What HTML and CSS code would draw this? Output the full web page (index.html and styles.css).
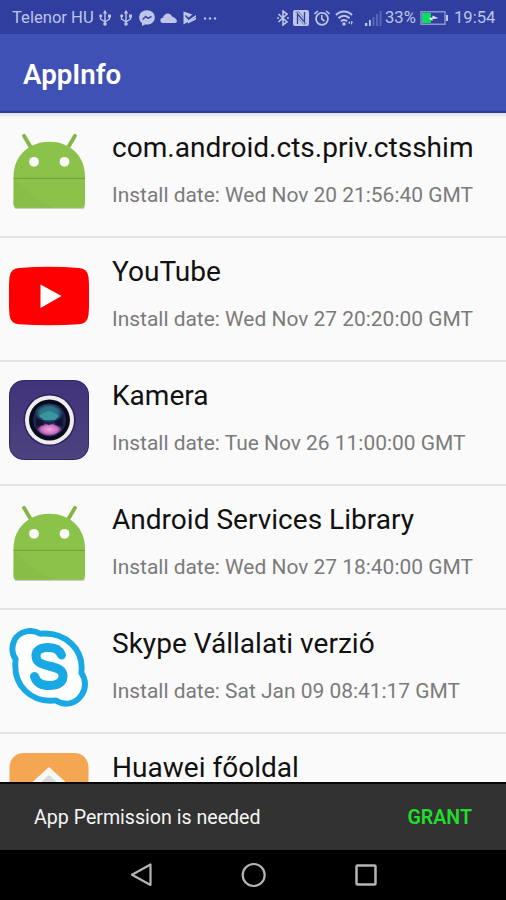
FILE: index.html
```html
<!DOCTYPE html>
<html lang="hu">
<head>
<meta charset="utf-8">
<title>AppInfo</title>
<link rel="stylesheet" href="styles.css">
</head>
<body>
<svg class="defs" width="0" height="0">
  <symbol id="usb" viewBox="0 0 12 16"><path d="M6 1v13M1.500 6v3l4.500 3 4.500-3V6" fill="none" stroke="currentColor" stroke-width="1.400"/><path d="M6 0l2.200 3.500H3.800z"/><circle cx="6" cy="14" r="1.800"/><circle cx="1.700" cy="5.800" r="1.500"/><path d="M9 4.500h3v3H9z"/></symbol>
  <symbol id="android" viewBox="0 1.200 80 80">
    <path d="M15 5l6.500 11M66 5l-6.500 11" stroke="#84b547" stroke-width="3.800" stroke-linecap="round"/>
    <path d="M7 76.500h67" stroke="#b7c1ab" stroke-width="3" stroke-linecap="round"/>
    <path d="M4.500 46C4.500 24 21 11 40.500 11S76 24 76 46V73q0 4-4 4H8.500q-4 0-4-4z" fill="#8bc34a"/>
    <path d="M5 47l21 20 18 10H8q-3.500 0-3.500-4z" fill="#83ba46" opacity=".6"/>
    <path d="M4.500 47.500H76" stroke="#72a340" stroke-width="1.200"/>
    <circle cx="25" cy="31" r="4.900" fill="#fafafa"/><circle cx="55.500" cy="31" r="4.900" fill="#fafafa"/>
  </symbol>
</svg>
<div class="screen">
  <header class="status">
    <div class="status-side">
      <span class="carrier">Telenor HU</span>
      <svg class="usb" width="12" height="16"><use href="#usb"/></svg>
      <svg class="usb2" width="12" height="16"><use href="#usb"/></svg>
      <svg class="msg" width="16" height="16" viewBox="0 0 16 16"><path d="M8 .3c4.500 0 7.800 3 7.800 7.200S12.500 14.600 8 14.600l-2-.2L3 16v-3C1.200 11.800.200 9.800.200 7.500.200 3.300 3.500.300 8 .300z"/><path d="M3.600 9.600l3.100-3.200 2.500 2 3.300-2" fill="none" stroke="#3543a0" stroke-width="1.500"/></svg>
      <svg class="cloud" width="17" height="10" viewBox="0 0 17 10"><path d="M3 10C-.5 10-.5 5 3 4.500 4.500-.5 10.500-1 12 3.500c1 .2 5 2.500 5 4.500q0 2-2 2z"/></svg>
      <svg class="play" width="13" height="14" viewBox="0 0 13 14"><path d="M.5.500l9 3-4 3-2.500-2.500-1 1 3.500 4L13 4v2L.5 13.500z"/><path d="M4.500 10.500L13 6.500v2L5 12.500z"/></svg>
      <svg class="dots" width="14" height="3" viewBox="0 0 14 3"><circle cx="2" cy="1.500" r="1.200"/><circle cx="7" cy="1.500" r="1.200"/><circle cx="12" cy="1.500" r="1.200"/></svg>
    </div>
    <div class="status-side">
      <svg class="bt" width="12" height="16" viewBox="0 0 12 16"><path d="M1.500 4l8.500 8-4 3V1l4 3-8.500 8" fill="none" stroke="currentColor" stroke-width="1.600"/><circle cx="1" cy="8" r="1"/><circle cx="11" cy="8" r="1"/></svg>
      <svg class="nfc" width="16" height="16" viewBox="0 0 16 16"><rect width="16" height="16" rx="2"/><path d="M4.500 14V4l7 8V2" fill="none" stroke="#303f9f" stroke-width="1.300"/><path d="M2.500 2.500l3-.8 5 5.800M13.500 13.500l-3 .8-5-5.800" fill="none" stroke="#303f9f" stroke-width=".6"/></svg>
      <svg class="alarm" width="16" height="16" viewBox="0 0 16 16"><circle cx="8" cy="8.800" r="6" fill="none" stroke="currentColor" stroke-width="1.800"/><path d="M.5 4l3.500-3M15.500 4L12 1M7.800 5v4l2.700 2" fill="none" stroke="currentColor" stroke-width="1.600"/></svg>
      <svg class="wifi" width="18" height="16" viewBox="0 0 18 16"><path d="M1 5c4.500-4.700 11.500-4.700 16 0M3.500 8.300c3.300-3.300 7.700-3.300 11 0M6 11.300c1.700-1.800 4.300-1.800 6 0" fill="none" stroke="currentColor" stroke-width="2.100"/><circle cx="9" cy="14" r="1.700"/><path d="M13 13l2-2v3zM18 12l-2 3v-4z"/></svg>
      <svg class="signal" width="17" height="16" viewBox="0 0 17 16"><path d="M0 13h2.300v3H0zM4 10h1.800v6H4z"/><path d="M7.500 7h2v9h-2zM11 4h2v12h-2zM14.500 1h2v15h-2z" opacity=".3"/></svg>
      <span class="pct">33%</span>
      <svg class="battery" width="28" height="14" viewBox="0 0 28 14"><path d="M1 .8h24v12.400H1z" fill="none" stroke="#8d96cb" stroke-width="1.400"/><path d="M2 2h9v10H2z" fill="#08df60"/><path d="M26 4h2v6h-2z"/><path d="M8.500 7.200l4-.7v-2l6 2.700-6 .7v2z" fill="#e0e5f5"/></svg>
      <span class="clock">19:54</span>
    </div>
  </header>
  <div class="appbar"><h1>AppInfo</h1></div>
  <main class="list">
    <section class="row">
      <svg class="icon" viewBox="0 0 80 80"><use href="#android"/></svg>
      <div class="info"><h2>com.android.cts.priv.ctsshim</h2><p>Install date: Wed Nov 20 21:56:40 GMT</p></div>
    </section>
    <section class="row">
      <svg class="icon" viewBox="0 0 80 80"><path d="M10 12q30-2.500 60 0 8.500.7 9.500 9 1.500 19 0 38-1 8.500-9.500 9.300-30 2-60 0Q1.500 67.500.500 59q-1.500-19 0-38 1-8.300 9.500-9z" fill="#f00"/><path d="M31.500 28.500v23.500L52.500 40z" fill="#fff"/></svg>
      <div class="info"><h2>YouTube</h2><p>Install date: Wed Nov 27 20:20:00 GMT</p></div>
    </section>
    <section class="row">
      <svg class="icon" viewBox="0 0 80 80">
        <defs>
          <linearGradient id="cam" x2="0" y2="1"><stop stop-color="#41337a"/><stop offset="1" stop-color="#4c437f"/></linearGradient>
          <radialGradient id="teal"><stop stop-color="#347e91"/><stop offset=".65" stop-color="#2a7180"/><stop offset="1" stop-color="#182454"/></radialGradient>
          <radialGradient id="pink"><stop stop-color="#f1a8e1"/><stop offset=".65" stop-color="#c870bd"/><stop offset="1" stop-color="#4b2a68"/></radialGradient>
        </defs>
        <rect x=".5" y=".5" width="79" height="79" rx="14" fill="url(#cam)" stroke="#33256d"/>
        <circle cx="40.500" cy="40" r="26" fill="#30205e"/><circle cx="40.500" cy="40" r="24.500" fill="#eee"/><circle cx="40.500" cy="40" r="20.500" fill="#080b1b"/><circle cx="40.500" cy="40" r="16.500" fill="#1e2452"/>
        <ellipse cx="40" cy="33" rx="14" ry="9.500" fill="url(#teal)"/><path d="M30 36q10-9 20 0l-4 4H35z" fill="#3996a0"/><path d="M28 49l7-6 5 2 5-2 8 6q-6 7-13 7t-12-7z" fill="url(#pink)"/><path d="M27 38l8 3v4l-8 1zM54 38l-8 3v4l8 1z" fill="#10142d"/>
      </svg>
      <div class="info"><h2>Kamera</h2><p>Install date: Tue Nov 26 11:00:00 GMT</p></div>
    </section>
    <section class="row">
      <svg class="icon" viewBox="0 0 80 80"><use href="#android"/></svg>
      <div class="info"><h2>Android Services Library</h2><p>Install date: Wed Nov 27 18:40:00 GMT</p></div>
    </section>
    <section class="row">
      <svg class="icon" viewBox="0 0 80 80"><path d="M31 5C22-.5 10 2.500 5 11 1.500 18 2 26 6 31 2.500 58 22 76 47 73c9 6 20 4 26-5 5-7 5-16 0-23C76 21 57 3 31 5z" transform="translate(.8 .8) scale(.98)" fill="#fff" stroke="#18a9e4" stroke-width="6" stroke-linejoin="round"/><path d="M52.500 27C50 20.500 45 19.500 39 19.500c-7 0-12 3-12 8 0 7 5 8.500 13 10.500 9 2 14 4 14 10 0 7-6 9.500-14 9.500-8 0-12.500-3-14.500-9" fill="none" stroke="#18a9e4" stroke-width="9" stroke-linecap="round"/></svg>
      <div class="info"><h2>Skype Vállalati verzió</h2><p>Install date: Sat Jan 09 08:41:17 GMT</p></div>
    </section>
    <section class="row">
      <svg class="icon" viewBox="0 0 80 80"><rect x=".5" y="1" width="79" height="78" rx="14" fill="#f5a652"/><path d="M40 15L7 45h66z" fill="#f8f8f6"/><path d="M40 23L18 43h44z" fill="#d9d9d7"/></svg>
      <div class="info"><h2>Huawei főoldal</h2></div>
    </section>
  </main>
  <div class="snackbar"><span class="notice">App Permission is needed</span><button>GRANT</button></div>
  <nav class="nav">
    <svg width="24" height="26" viewBox="0 0 24 26"><path d="M20.500 2.500v20.500L2 12.700z" fill="none" stroke="#b5b5b5" stroke-width="2.200" stroke-linejoin="round"/></svg>
    <svg width="26" height="26" viewBox="0 0 26 26"><circle cx="12.700" cy="13" r="11" fill="none" stroke="#b5b5b5" stroke-width="2.200"/></svg>
    <svg width="24" height="24" viewBox="0 0 24 24"><rect x="2.500" y="2.500" width="19" height="19" rx="1" fill="none" stroke="#b5b5b5" stroke-width="2.500"/></svg>
  </nav>
</div>
</body>
</html>
```
FILE: styles.css
```css
* { box-sizing: border-box; }
body { margin: 0; font-family: Roboto, sans-serif; background: #fafafa; }
h1, h2, p { margin: 0; font-weight: 400; white-space: nowrap; }
.defs { display: block; }
.screen { width: 506px; height: 900px; display: flex; flex-direction: column; overflow: hidden; }
.status { flex: 0 0 34px; background: #303f9f; color: #bdc5e9; padding: 2px 10px 0 12px; display: flex; justify-content: space-between; font-size: 16.600px; line-height: 32px; }
.status-side { display: flex; align-items: center; }
.status svg { fill: currentColor; flex: none; }
.carrier { width: 83px; white-space: nowrap; }
.usb { margin-left: 4px; }
.usb2 { margin-left: 9px; }
.msg { margin-left: 7px; }
.cloud { margin-left: 5px; }
.play { margin-left: 6px; }
.dots { margin-left: 7px; }
.nfc { margin-left: 4px; }
.alarm, .wifi { margin-left: 5px; }
.signal { margin-left: 12px; }
.pct { width: 30px; margin-left: 3px; white-space: nowrap; }
.battery { margin-left: 5px; }
.clock { width: 42px; margin-left: 6px; white-space: nowrap; }
.appbar { flex: 0 0 79px; background: #3f51b5; border-bottom: 2px solid #2a399d; padding: 4px 0 0 23px; display: flex; align-items: center; }
.appbar h1 { color: #fff; font-size: 27.700px; font-weight: 600; line-height: 32px; }
.list { flex: 1 1 0; min-height: 0; overflow: hidden; padding-top: 1px; background: linear-gradient(#e2e2e2, #fafafa 6px); }
.row { height: 124px; display: flex; padding: 18px 0 0 9px; border-bottom: 2px solid #e3e3e3; }
.icon { width: 80px; height: 80px; flex: none; }
.info { margin-left: 23px; }
.info h2 { font-size: 28.050px; line-height: 32px; color: #111; }
.info p { margin-top: 17.500px; font-size: 20.950px; line-height: 26px; color: #7b7b7b; }
.snackbar { flex: 0 0 68px; background: #323232; border-top: 2px solid #080808; padding: 2px 34px 0; display: flex; align-items: center; justify-content: space-between; }
.notice { color: #f5f5f5; font-size: 19.600px; line-height: 24px; }
.snackbar button { border: 0; padding: 0; background: none; color: #22dc2e; font: 600 19.600px/24px Roboto, sans-serif; }
.nav { flex: 0 0 50px; background: #000; display: flex; align-items: center; padding-left: 130px; gap: 87px; }
```
